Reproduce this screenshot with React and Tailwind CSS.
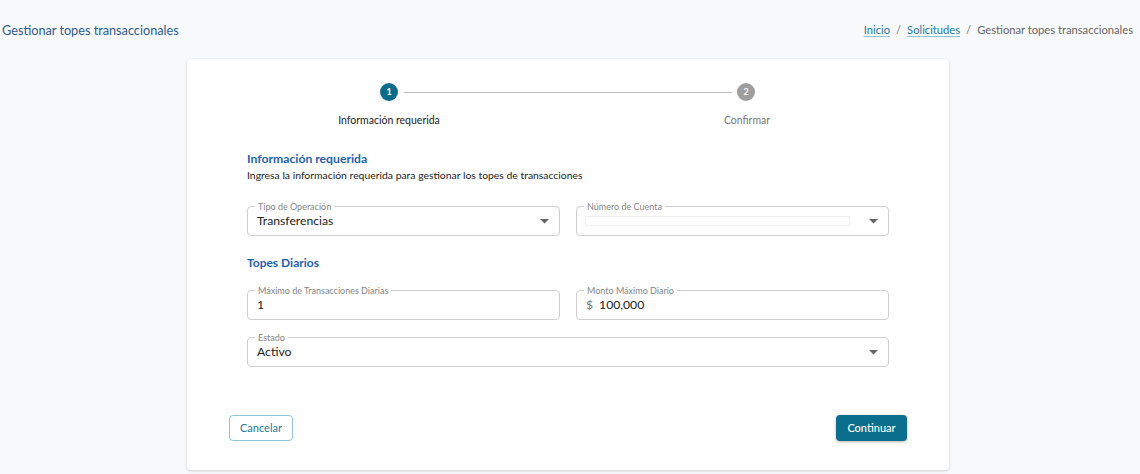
import React from "react";

const Arrow = () => (
  <svg width="9" height="5" viewBox="0 0 9 5" className="shrink-0">
    <path d="M0 0 L9 0 L4.5 4.5 Z" fill="#666" />
  </svg>
);

const Field = ({ label, children, className = "" }) => (
  <div className={`relative h-[30px] border border-[#cfcfcf] rounded-[4px] flex items-center pl-[9px] pr-[10px] ${className}`}>
    <span className="absolute left-[7px] top-[-6px] bg-white px-[3px] text-[9px] leading-[11px] text-[#858585]">
      {label}
    </span>
    {children}
  </div>
);

const App = () => {
  return (
    <div className="min-h-[474px] bg-[#f8f9fb] font-['Lato','Liberation_Sans',sans-serif]">
      {/* header */}
      <div className="h-[59px] flex items-center justify-between pl-[2px] pr-[7px] pt-[3px]">
        <h1 className="text-[12.7px] text-[#2f5b8e]">Gestionar topes transaccionales</h1>
        <div className="flex items-center gap-[6px] text-[11.2px] mt-[-2px]">
          <a className="text-[#1b7a9c] underline underline-offset-2 decoration-[#8fc3d4]">Inicio</a>
          <span className="text-[#777]">/</span>
          <a className="text-[#1b7a9c] underline underline-offset-2 decoration-[#8fc3d4]">Solicitudes</a>
          <span className="text-[#777]">/</span>
          <span className="text-[#666]">Gestionar topes transaccionales</span>
        </div>
      </div>

      {/* card */}
      <div className="ml-[187px] w-[762px] h-[411px] bg-white rounded-[4px] shadow-[0_1px_3px_rgba(0,0,0,0.18)] flex flex-col">
        {/* stepper */}
        <div className="pt-[24px]">
          <div className="flex items-center pl-[193px] pr-[194px]">
            <div className="w-[18px] h-[18px] rounded-full bg-[#0d6b8a] text-white text-[9px] font-bold flex items-center justify-center">1</div>
            <div className="flex-1 h-px bg-[#bdbdbd] ml-[6px] mr-[5px]" />
            <div className="w-[18px] h-[18px] rounded-full bg-[#9e9e9e] text-white text-[9px] font-bold flex items-center justify-center">2</div>
          </div>
          <div className="grid grid-cols-2 px-[23px] mt-[12px] text-[10.5px] leading-[14px]">
            <span className="text-center text-[#222]">Información requerida</span>
            <span className="text-center text-[#777]">Confirmar</span>
          </div>
        </div>

        {/* form */}
        <div className="px-[60px] mt-[24px]">
          <h2 className="text-[12.2px] leading-[16px] font-bold text-[#1f5fae]">Información requerida</h2>
          <p className="text-[10.4px] leading-[15px] text-[#222] mt-[1px]">
            Ingresa la información requerida para gestionar los topes de transacciones
          </p>

          <div className="grid grid-cols-2 gap-[16px] mt-[23px]">
            <Field label="Tipo de Operación">
              <span className="flex-1 text-[12.2px] text-[#222]">Transferencias</span>
              <Arrow />
            </Field>
            <Field label="Número de Cuenta">
              <div className="flex-1 mr-[19px] ml-[-1px] h-[10px] border border-[#f0f0f0]" />
              <Arrow />
            </Field>
          </div>

          <h2 className="text-[12px] leading-[16px] font-bold text-[#1f5fae] mt-[19px]">Topes Diarios</h2>

          <div className="grid grid-cols-2 gap-[16px] mt-[19px]">
            <Field label="Máximo de Transacciones Diarias">
              <span className="flex-1 text-[12.2px] text-[#222]">1</span>
            </Field>
            <Field label="Monto Máximo Diario">
              <span className="text-[12.2px] text-[#777] mr-[6px]">$</span>
              <span className="flex-1 text-[12.2px] text-[#222]">100,000</span>
            </Field>
          </div>

          <Field label="Estado" className="mt-[17px]">
            <span className="flex-1 text-[12.2px] text-[#222]">Activo</span>
            <Arrow />
          </Field>
        </div>

        {/* actions */}
        <div className="mt-auto flex items-center justify-between px-[42px] pb-[29px]">
          <button className="h-[26px] w-[64px] border border-[#8ec5d6] rounded-[4px] text-[11px] text-[#1b7a9c] bg-white">
            Cancelar
          </button>
          <button className="h-[26px] w-[71px] rounded-[4px] text-[11px] font-medium text-white bg-[#0b6e8c] shadow-[0_1px_3px_rgba(0,0,0,0.3)]">
            Continuar
          </button>
        </div>
      </div>
    </div>
  );
};

export default App;
